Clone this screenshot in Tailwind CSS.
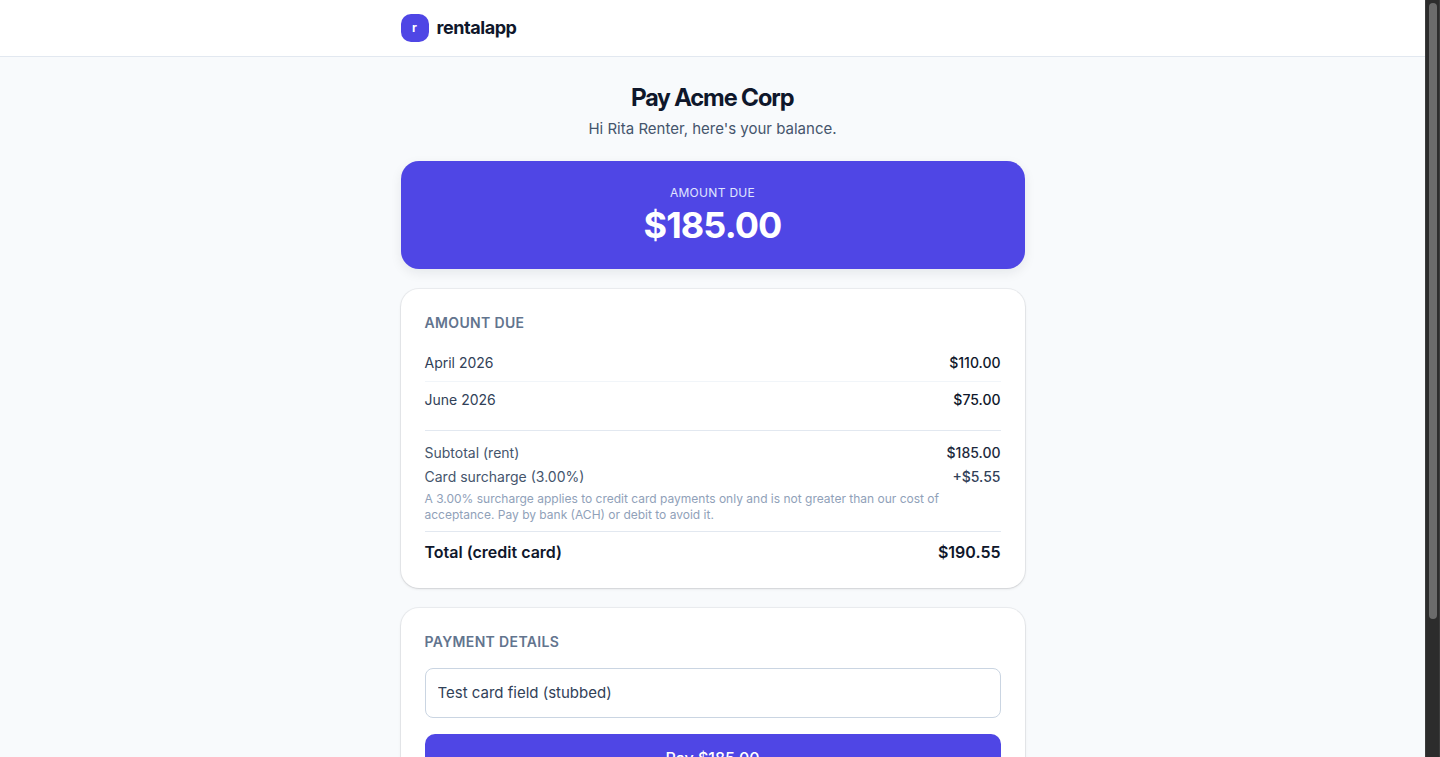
<!DOCTYPE html>
<html lang="en">
<head>
<meta charset="utf-8">
<meta name="viewport" content="width=device-width, initial-scale=1">
<title>Pay Acme Corp</title>
<script src="https://cdn.jsdelivr.net/npm/@tailwindcss/browser@4"></script>
</head>
<body class="flex h-screen overflow-hidden bg-slate-50 font-[Inter,sans-serif] text-slate-900 antialiased">
  <div class="min-w-0 flex-1 overflow-hidden">
    <header class="border-b border-slate-200 bg-white">
      <div class="mx-auto flex h-14 max-w-2xl items-center gap-2 px-6">
        <span class="flex size-7 items-center justify-center rounded-[10px] bg-[#4f46e5] text-xs font-bold text-white">r</span>
        <span class="text-lg font-bold tracking-tight">rentalapp</span>
      </div>
    </header>
    <main class="mx-auto flex max-w-2xl flex-col gap-5 px-6 py-6">
      <div class="text-center">
        <h1 class="font-['Inter_Display',Inter,sans-serif] text-2xl leading-[34px] font-bold tracking-tight">Pay Acme Corp</h1>
        <p class="mt-[2px] text-[15px] leading-6 text-slate-600">Hi Rita Renter, here's your balance.</p>
      </div>

      <section class="rounded-[18px] bg-[#4f46e5] p-6 text-center text-white shadow-[0_4px_12px_rgba(15,23,42,0.08)]">
        <p class="text-xs tracking-wide text-indigo-100 uppercase">Amount due</p>
        <p class="mt-1 text-4xl font-bold tracking-tight">$185.00</p>
      </section>

      <section class="rounded-[18px] bg-white p-6 shadow-sm ring-1 ring-slate-900/5">
        <h2 class="text-sm font-semibold tracking-wide text-slate-500 uppercase">Amount due</h2>
        <dl class="mt-3 divide-y divide-slate-100 text-sm">
          <div class="flex justify-between py-2">
            <dt class="text-slate-700">April 2026</dt>
            <dd class="font-medium">$110.00</dd>
          </div>
          <div class="flex justify-between py-2">
            <dt class="text-slate-700">June 2026</dt>
            <dd class="font-medium">$75.00</dd>
          </div>
        </dl>
        <div class="mt-3 border-t border-slate-200 pt-3 text-sm">
          <div class="flex justify-between">
            <span class="text-slate-600">Subtotal (rent)</span>
            <span class="font-medium text-slate-800">$185.00</span>
          </div>
          <div class="mt-1 flex justify-between">
            <span class="text-slate-600">Card surcharge (3.00%)</span>
            <span class="font-medium text-slate-700">+$5.55</span>
          </div>
          <p class="mt-1 text-xs text-slate-400">A 3.00% surcharge applies to credit card payments only and is not greater than our cost of acceptance. Pay by bank (ACH) or debit to avoid it.</p>
          <div class="mt-2 flex justify-between border-t border-slate-200 pt-2 text-base font-semibold">
            <span>Total (credit card)</span>
            <span>$190.55</span>
          </div>
        </div>
      </section>

      <section class="rounded-[18px] bg-white p-6 shadow-sm ring-1 ring-slate-900/5">
        <h2 class="text-sm font-semibold tracking-wide text-slate-500 uppercase">Payment details</h2>
        <form class="mt-4">
          <input type="text" aria-label="Card field" value="Test card field (stubbed)" class="block w-full rounded-lg border border-slate-300 bg-white p-3 text-[15px] leading-6 text-slate-700">
          <button type="button" class="mt-4 block w-full rounded-[10px] bg-[#4f46e5] py-3 text-base font-medium text-white">Pay $185.00</button>
        </form>
      </section>
    </main>
  </div>
  <div class="h-full w-[15px] shrink-0 border-x border-[#3c3c3c] bg-[#2c2c2c] px-[3px] py-[3px]" aria-hidden="true">
    <div class="mx-auto h-[82%] w-2 rounded-full bg-[#6b6b6b]"></div>
  </div>
</body>
</html>
